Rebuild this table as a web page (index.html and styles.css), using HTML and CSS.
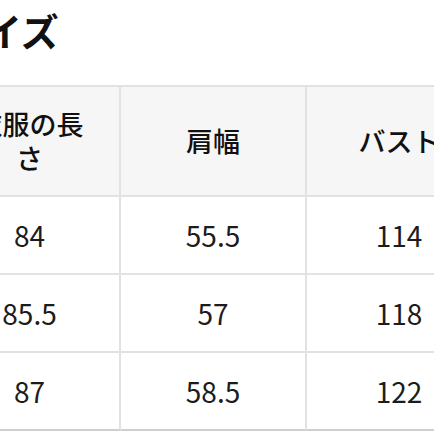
FILE: index.html
```html
<!DOCTYPE html>
<html lang="ja">
<head>
<meta charset="utf-8">
<link rel="stylesheet" href="styles.css">
</head>
<body>
<div class="page">
  <h2 class="title">サイズ</h2>
  <div class="table">
    <div class="cell head">衣服の長さ</div>
    <div class="cell head">肩幅</div>
    <div class="cell head">バスト</div>
    <div class="cell">84</div>
    <div class="cell">55.5</div>
    <div class="cell">114</div>
    <div class="cell">85.5</div>
    <div class="cell">57</div>
    <div class="cell">118</div>
    <div class="cell last">87</div>
    <div class="cell last">58.5</div>
    <div class="cell last">122</div>
  </div>
</div>
</body>
</html>
```

FILE: styles.css
```css
html, body {
  margin: 0;
  padding: 0;
  background: #ffffff;
  overflow: hidden;
}
body {
  width: 434px;
  height: 434px;
  font-family: "Noto Sans CJK JP", "Noto Sans", sans-serif;
  color: #151515;
}
.page {
  margin-left: -60px;
  width: 700px;
}
.title {
  margin: 11px 0 0 6px;
  font-size: 38px;
  line-height: 38px;
  font-weight: 700;
  color: #111;
}
.table {
  margin-top: 36px;
  display: grid;
  grid-template-columns: 181px 186px 186px;
  border-top: 2px solid #e2e2e2;
}
.cell {
  display: flex;
  align-items: center;
  justify-content: center;
  text-align: center;
  height: 76px;
  border-right: 2px solid #e2e2e2;
  border-bottom: 2px solid #e2e2e2;
  font-size: 28px;
  color: #1c1c1c;
}
.head {
  height: 108px;
  background: #f6f6f6;
  font-size: 27px;
  line-height: 34px;
  font-weight: 500;
  padding: 0 28px;
  color: #111;
}
.last {
  border-bottom-color: #cfcfcf;
}
```
